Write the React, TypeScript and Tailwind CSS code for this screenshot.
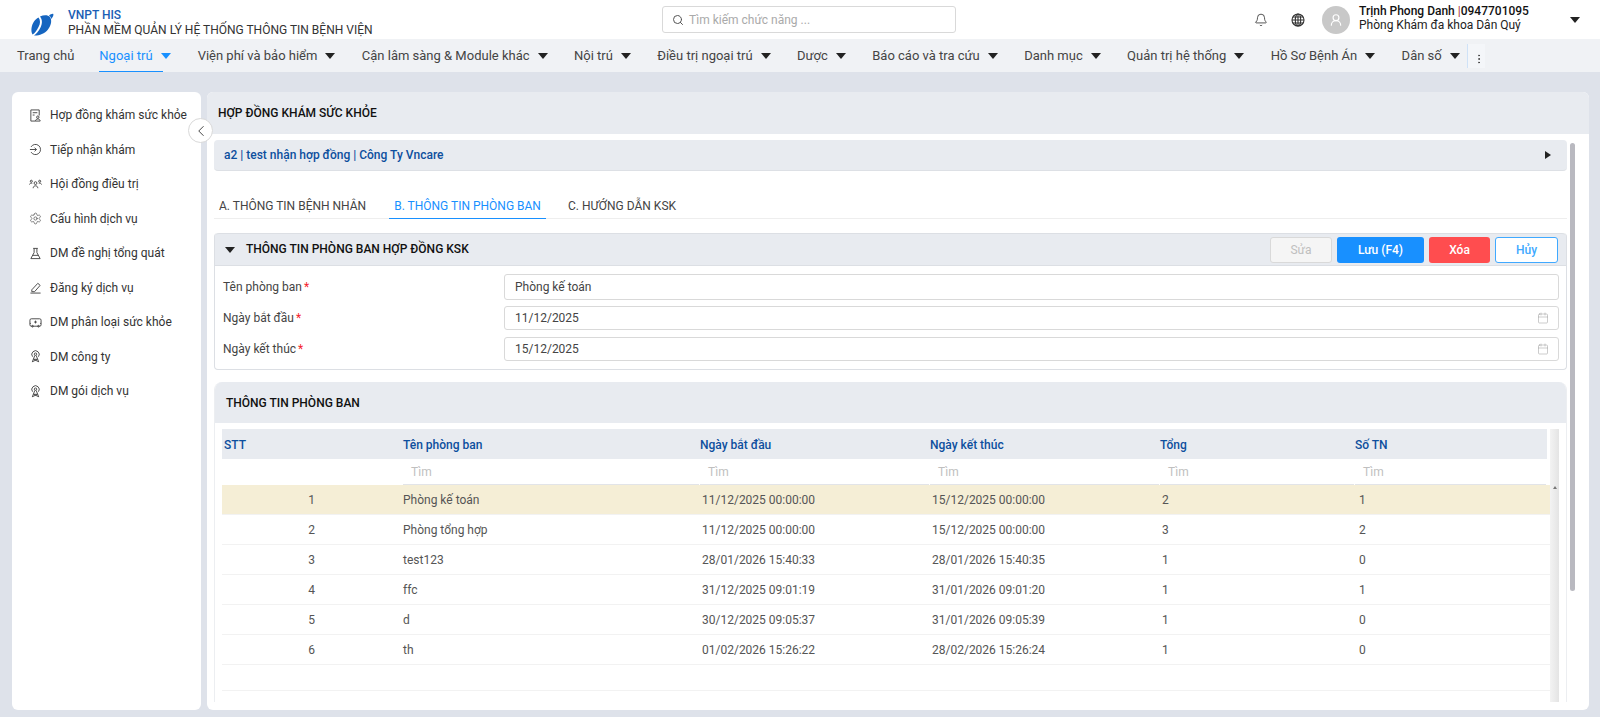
import React from "react";
import { Bell, Calendar, ChevronLeft, EllipsisVertical, Search, Settings, UserRound } from "lucide-react";

const Caret = ({ className = "border-t-[#222]" }: { className?: string }) => (
  <span className={`inline-block w-0 h-0 border-x-[5px] border-x-transparent border-t-[6px] ${className}`} />
);

const Ico = ({ children }: { children: React.ReactNode }) => (
  <svg width="13" height="13" viewBox="0 0 14 14" fill="none" stroke="#444" strokeWidth="1">
    {children}
  </svg>
);

const ContractIcon = () => (
  <Ico>
    <path d="M7 13H2V1h9v6" />
    <path d="M4 4h5M4 6.5h2" />
    <circle cx="9.5" cy="8.8" r="1.3" />
    <path d="M7 13c0-3 5-3 5 0z" />
  </Ico>
);
const EnterIcon = () => (
  <Ico>
    <path d="M2.2 4.2A5.5 5.5 0 1 1 2.2 9.8" />
    <path d="M1 7h7M6 5l2 2-2 2" />
  </Ico>
);
const CouncilIcon = () => (
  <Ico>
    <circle cx="7" cy="5.5" r="1.5" />
    <path d="M4.5 11c0-3.5 5-3.5 5 0" />
    <circle cx="2.5" cy="3.5" r="1.1" />
    <circle cx="11.5" cy="3.5" r="1.1" />
    <path d="M.5 7c.3-1.2 1.5-1.7 3-1.3M13.5 7c-.3-1.2-1.500-1.700-3-1.300" />
  </Ico>
);
const FlaskIcon = () => (
  <Ico>
    <path d="M4.500 1.500h5M5.500 1.500V6L2 12.500h10L8.500 6V1.500M4 9h6" />
  </Ico>
);
const PenIcon = () => (
  <Ico>
    <path d="M3 9.500 9.500 2.500l2.500 2.200L6 11.500H3zM1.500 13h11" />
  </Ico>
);
const AmbulanceIcon = () => (
  <Ico>
    <rect x="1" y="3" width="12" height="8" rx="1.500" />
    <path d="M7 5v3M5.500 6.500h3M1 8h1M12 8h1" />
    <circle cx="3.800" cy="11" r=".9" />
    <circle cx="10.200" cy="11" r=".9" />
  </Ico>
);
const TowerIcon = () => (
  <Ico>
    <circle cx="7" cy="4.500" r="1.300" />
    <path d="M3.800 7.200a4 4 0 1 1 6.400 0" />
    <path d="M6.200 6 3.500 13M7.800 6l2.700 7M5 10h4M4 12.500l5-2.500M10 12.500 5 10" />
  </Ico>
);
const GlobeIcon = () => (
  <svg width="14" height="14" viewBox="0 0 14 14" fill="none" stroke="#333" strokeWidth="1.100">
    <circle cx="7" cy="7" r="6" />
    <ellipse cx="7" cy="7" rx="2.700" ry="6" />
    <path d="M1 7h12M2 4h10M2 10h10M7 1v12" />
  </svg>
);

const navItems = [
  "Viện phí và bảo hiểm",
  "Cận lâm sàng & Module khác",
  "Nội trú",
  "Điều trị ngoại trú",
  "Dược",
  "Báo cáo và tra cứu",
  "Danh mục",
  "Quản trị hệ thống",
  "Hồ Sơ Bệnh Án",
];

const sideItems: [React.ReactNode, string][] = [
  [<ContractIcon />, "Hợp đồng khám sức khỏe"],
  [<EnterIcon />, "Tiếp nhận khám"],
  [<CouncilIcon />, "Hội đồng điều trị"],
  [<Settings size={13} strokeWidth={1.2} />, "Cấu hình dịch vụ"],
  [<FlaskIcon />, "DM đề nghị tổng quát"],
  [<PenIcon />, "Đăng ký dịch vụ"],
  [<AmbulanceIcon />, "DM phân loại sức khỏe"],
  [<TowerIcon />, "DM công ty"],
  [<TowerIcon />, "DM gói dịch vụ"],
];

const rows = [
  ["1", "Phòng kế toán", "11/12/2025 00:00:00", "15/12/2025 00:00:00", "2", "1"],
  ["2", "Phòng tổng hợp", "11/12/2025 00:00:00", "15/12/2025 00:00:00", "3", "2"],
  ["3", "test123", "28/01/2026 15:40:33", "28/01/2026 15:40:35", "1", "0"],
  ["4", "ffc", "31/12/2025 09:01:19", "31/01/2026 09:01:20", "1", "1"],
  ["5", "d", "30/12/2025 09:05:37", "31/01/2026 09:05:39", "1", "0"],
  ["6", "th", "01/02/2026 15:26:22", "28/02/2026 15:26:24", "1", "0"],
];

const cols = "grid grid-cols-[181px_297px_230px_230px_195px_1fr]";

const Field = ({ label, value, date, h }: { label: string; value: string; date?: boolean; h: string }) => (
  <div className="flex items-center h-[31px] pl-[8px] pr-[7px]">
    <div className="w-[281px] text-[12px] text-[#444]">
      {label}<span className="text-[#f5222d] ml-[2px]">*</span>
    </div>
    <div className={`flex-1 ${h} border border-[#d9d9d9] rounded-[3px] bg-white flex items-center justify-between pl-[10px] pr-[9px] text-[12px] text-[#444]`}>
      <span>{value}</span>
      {date && <Calendar size={12} strokeWidth={1} className="text-[#999]" />}
    </div>
  </div>
);

export default function App() {
  return (
    <div className="w-[1600px] h-[717px] overflow-hidden bg-[#dee2ea] flex flex-col font-['Roboto',sans-serif]">
      <header className="h-[39px] shrink-0 bg-white flex items-center relative">
        <div className="w-[68px] flex justify-end pr-[14px] pt-[11px] shrink-0">
          <svg width="24" height="24" viewBox="0 0 24 24">
            <path d="M10 3.500C14 1.800 18 2 20 4c2 3 1.500 8-2 12.500S8 23 4 22.500C6 21 8.500 18.500 10.500 14.500 12.500 10.500 12.500 6.500 10 3.500z" fill="#1565c0" />
            <path d="M8.500 4.500C10.500 7 10.500 10.500 8.500 14 6.800 17.500 4.500 20.500 2.500 21.500 .5 18 1.500 12 4 8.500 5.200 6.800 6.800 5.400 8.500 4.500z" fill="#1565c0" />
            <path d="M19 2.500c1.500-1 3.500-2 4.300-1.500.5 1-.5 3-2 5-.2-1.500-1-2.700-2.300-3.500z" fill="#1565c0" />
          </svg>
        </div>
        <div className="flex flex-col leading-[15px] w-[594px] shrink-0 pt-[7px]">
          <span className="text-[12px] font-medium text-[#1a5eb5]">VNPT HIS</span>
          <span className="text-[12px] text-[#333]">PHẦN MỀM QUẢN LÝ HỆ THỐNG THÔNG TIN BỆNH VIỆN</span>
        </div>
        <div className="w-[294px] h-[27px] border border-[#d9d9d9] rounded-[3px] flex items-center pl-[9px] gap-[5px] text-[12px] text-[#aaa] shrink-0">
          <Search size={12} className="text-[#555]" />
          <span>Tìm kiếm chức năng ...</span>
        </div>
        <div className="flex-1" />
        <Bell size={14} strokeWidth={1.300} className="text-[#222] mr-[23px]" />
        <span className="mr-[17px] flex"><GlobeIcon /></span>
        <div className="w-[28px] h-[28px] rounded-full bg-[#c8c8c8] flex items-center justify-center mr-[9px]">
          <UserRound size={14} className="text-white" />
        </div>
        <div className="w-[211px] flex flex-col leading-[14px] text-[12px] -mt-[3px]">
          <span className="font-medium text-[#111]">Trịnh Phong Danh <span className="font-normal text-[#a33]">|</span>0947701095</span>
          <span className="text-[#222]">Phòng Khám đa khoa Dân Quý</span>
        </div>
        <Caret className="border-t-[#222] mr-[20px]" />
      </header>

      <nav className="h-[33px] shrink-0 bg-[#f0f2f5] flex items-center pl-[17px] text-[13px] text-[#444] relative">
        <span className="mr-[25px] pt-[1px]">Trang chủ</span>
        <span className="h-full flex items-center relative mr-[27px] text-[#1890ff] pt-[1px]">
          <span>Ngoại trú</span>
          <span className="ml-[8px] flex"><Caret className="border-t-[#1890ff]" /></span>
          <span className="absolute left-0 bottom-0 h-[1.500px] w-[64px] bg-[#1890ff]" />
        </span>
        {navItems.map((t) => (
          <span key={t} className="flex items-center mr-[26.400px] pt-[1px]">
            <span>{t}</span>
            <span className="ml-[8px] flex"><Caret /></span>
          </span>
        ))}
        <span className="flex items-center pt-[1px]">
          <span>Dân số</span>
          <span className="ml-[8px] flex"><Caret /></span>
        </span>
        <span className="ml-[7px] w-[18px] h-[24px] mt-[1px] flex items-center justify-end border-l border-[#cfe2f7] bg-[#f4f6f9]">
          <EllipsisVertical size={12} className="text-[#444] mt-[6px]" />
        </span>
      </nav>

      <main className="flex-1 min-h-0 flex gap-[6px] pt-[20px] pb-[7px] pl-[12px] pr-[11px]">
        <aside className="w-[189px] shrink-0 bg-white rounded-[6px] relative pt-[6px] pl-[17px]">
          {sideItems.map(([icon, t]) => (
            <div key={t} className="h-[34.500px] flex items-center gap-[8px] text-[12px] text-[#333]">
              <span className="w-[13px] h-[13px] flex items-center justify-center text-[#444] shrink-0">{icon}</span>
              <span className="whitespace-nowrap">{t}</span>
            </div>
          ))}
          <div className="absolute left-[176px] top-[26px] w-[25px] h-[25px] rounded-full bg-white border border-[#d9d9d9] flex items-center justify-center">
            <ChevronLeft size={18} strokeWidth={1.200} className="text-[#333]" />
          </div>
        </aside>

        <section className="flex-1 min-w-0 bg-white rounded-[6px] overflow-hidden flex flex-col">
          <div className="h-[42px] shrink-0 bg-[#e8ebf0] flex items-center pl-[11px] text-[12px] font-medium text-[#111]">
            HỢP ĐỒNG KHÁM SỨC KHỎE
          </div>
          <div className="flex-1 min-h-0 flex pl-[7px] pr-[12px]">
            <div className="w-[1353px] shrink-0">
              <div className="mt-[6px] h-[31px] bg-[#e8ebf0] rounded-[4px] border-b border-[#dde0e5] flex items-center justify-between pl-[10px] pr-[16px] text-[12px] font-medium text-[#0d4f9e]">
                <span>a2 | test nhận hợp đồng | Công Ty Vncare</span>
                <span className="w-0 h-0 border-y-[4px] border-y-transparent border-l-[6px] border-l-[#222]" />
              </div>

              <div className="mt-[18px] h-[30px] border-b border-[#eeeeee] flex text-[12px] text-[#444]">
                <span className="pl-[5px] pr-[23px] pt-[8px]">A. THÔNG TIN BỆNH NHÂN</span>
                <span className="px-[5px] pt-[8px] h-[30px] border-b-[1.500px] border-[#1890ff] text-[#1890ff]">B. THÔNG TIN PHÒNG BAN</span>
                <span className="pl-[22px] pt-[8px]">C. HƯỚNG DẪN KSK</span>
              </div>

              <div className="mt-[14px] h-[137px] rounded-[4px] border-x border-b border-[#dcdfe4]">
                <div className="h-[33px] bg-[#e8ebf0] rounded-t-[4px] border-y border-[#dcdfe4] flex items-center pl-[10px] pr-[8px]">
                  <Caret />
                  <span className="ml-[11px] text-[12px] font-medium text-[#111] -mt-[2px]">THÔNG TIN PHÒNG BAN HỢP ĐỒNG KSK</span>
                  <div className="flex-1" />
                  <div className="flex gap-[5px] text-[12px] font-medium">
                    <button className="w-[62px] h-[26px] rounded-[3px] border border-[#d9d9d9] bg-[#f5f5f5] text-[#bfbfbf] font-normal">Sửa</button>
                    <button className="w-[87px] h-[26px] rounded-[3px] bg-[#1890ff] text-white">Lưu (F4)</button>
                    <button className="w-[61px] h-[26px] rounded-[3px] bg-[#ff4d4f] text-white">Xóa</button>
                    <button className="w-[63px] h-[26px] rounded-[3px] border border-[#40a9ff] bg-white text-[#40a9ff]">Hủy</button>
                  </div>
                </div>
                <div className="pt-[5px]">
                  <Field label="Tên phòng ban" value="Phòng kế toán" h="h-[26px]" />
                  <Field label="Ngày bắt đầu" value="11/12/2025" date h="h-[24px]" />
                  <Field label="Ngày kết thúc" value="15/12/2025" date h="h-[24px]" />
                </div>
              </div>

              <div className="mt-[12px] rounded-t-[8px] border-x border-[#eceef1] h-[320px] overflow-hidden">
                <div className="h-[41px] bg-[#e8ebf0] flex items-center pl-[11px] text-[12px] font-medium text-[#111]">
                  THÔNG TIN PHÒNG BAN
                </div>
                <div className="pt-[6px] pl-[7px] pr-[7px] relative h-[279px]">
                  <div className={`${cols} h-[30px] w-[1325px] items-center bg-[#e8ebf0] text-[12px] font-medium text-[#0d4f9e] pt-[1px]`}>
                    <span className="pl-[2px]">STT</span>
                    <span>Tên phòng ban</span>
                    <span>Ngày bắt đầu</span>
                    <span>Ngày kết thúc</span>
                    <span>Tổng</span>
                    <span>Số TN</span>
                  </div>
                  <div className={`${cols} h-[26px] w-[1325px] items-center text-[12px] text-[#bfbfbf]`}>
                    <span />
                    {[0, 1, 2, 3, 4].map((i) => (
                      <span key={i} className="h-full flex items-center pl-[8px] border-b border-[#e2e4e8] mr-[1px]">Tìm</span>
                    ))}
                  </div>
                  {rows.map((r, i) => (
                    <div key={r[0]} className={`${cols} h-[30px] w-[1330px] items-center text-[12px] text-[#555] border-b border-[#f2f2f2] ${i === 0 ? "bg-[#f5eed6]" : ""}`}>
                      <span className="text-center pr-[2px]">{r[0]}</span>
                      <span>{r[1]}</span>
                      <span className="pl-[2px]">{r[2]}</span>
                      <span className="pl-[2px]">{r[3]}</span>
                      <span className="pl-[2px]">{r[4]}</span>
                      <span className="pl-[4px]">{r[5]}</span>
                    </div>
                  ))}
                  <div className="h-[26px] w-[1330px] border-b border-[#f2f2f2]" />
                  <div className="absolute right-[7px] top-[6px] bottom-0 w-[9px] bg-gradient-to-r from-[#f3f3f3] to-[#e4e4e4]">
                    <div className="mt-[57px] mx-auto w-0 h-0 border-x-[2px] border-x-transparent border-b-[3px] border-b-[#777]" />
                  </div>
                </div>
              </div>
            </div>
            <div className="ml-[3px] w-[6px] shrink-0 pt-[9px] ">
              <div className="w-[5px] h-[448px] rounded-full bg-[#b9b9c0]" />
            </div>
          </div>
        </section>
      </main>
    </div>
  );
}
